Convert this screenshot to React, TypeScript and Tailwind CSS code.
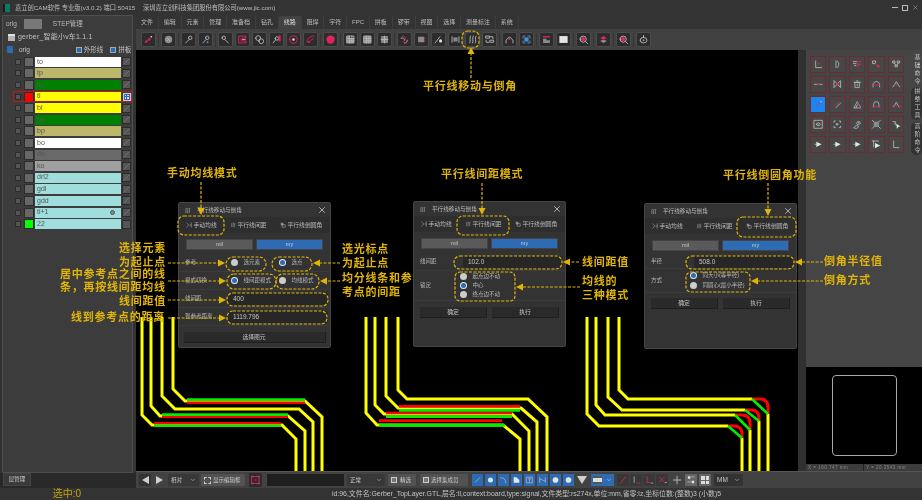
import React from 'react';
import { ChevronDown, X } from 'lucide-react';

const R = '#e0245e';
const Y = '#e0b507';
const dot = (x: number, y: number, r: number) => `M${x - r} ${y}a${r} ${r} 0 1 0 ${2 * r} 0a${r} ${r} 0 1 0 ${-2 * r} 0Z`;

type G = { g?: string; r?: string; b?: string; gf?: string; rf?: string; wf?: string; bf?: string; sep?: boolean };

function Glyph({ g, r, b, gf, rf, wf, bf }: G) {
  return (
    <svg viewBox="0 0 16 16" className="w-full h-full block" fill="none" strokeWidth="1.3" strokeLinecap="round" strokeLinejoin="round">
      {gf && <path d={gf} fill="#8a8a8a" />}
      {g && <path d={g} stroke="#b8b8b8" />}
      {bf && <path d={bf} fill="#4a90d9" />}
      {b && <path d={b} stroke="#4a90d9" />}
      {r && <path d={r} stroke={R} />}
      {wf && <path d={wf} fill="#e4e4e4" />}
      {rf && <path d={rf} fill={R} />}
    </svg>
  );
}

const probe = 'M4 13l5-5' + dot(10.5, 5.5, 2.5);
const grid = 'M3 3h10v10H3zM3 6.5h10M3 10h10M6.5 3v10M10 3v10';
const waves = 'M4 13c2-3-1-6 1-10M8 13c2-3-1-6 1-10M12 13c2-3-1-6 1-10';

const tools: G[] = [
  { r: 'M3 12l9-7', rf: dot(5, 11, 1.8) + dot(9, 8, 1.8), wf: dot(12, 4, 1.2), sep: true },
  { gf: dot(8, 8, 5.5), g: 'M6 6l4 4M10 6l-4 4', sep: true },
  { g: probe, sep: false },
  { g: probe, bf: dot(11, 12, 1.4), sep: true },
  { g: 'M12 13L7 8' + dot(5.5, 5.5, 2.5) },
  { r: 'M3 3h10v3H6v4h7v3H3z', g: 'M8 8h4' },
  { g: dot(6, 6, 3.5) + dot(10.5, 10.5, 3.5) },
  { g: 'M3 13l4-5' + dot(8.5, 6.5, 2.5), rf: 'M11 2h3v9h-3z' },
  { r: dot(8, 8, 5.5), wf: dot(8, 8, 1.8) },
  { r: 'M3 12c0-5 4-9 10-9M7 12c0-2 2-4 5-5', rf: dot(5.5, 11.5, 1.5), sep: true },
  { rf: dot(8, 8, 6), wf: dot(8, 8, 3.2), sep: true },
  { gf: 'M3 3h4v3h6v7H3z', g: grid },
  { gf: 'M3 3h10v10H3z', g: grid },
  { gf: 'M3 3h10v10H3z', g: 'M3 8h10M8 3v10', sep: true },
  { r: 'M5 3c5 0 6 4 3 6s-2 4 3 4', g: 'M3 6c3-1 5 0 5 3M8 13c2 0 4-1 4-4' },
  { gf: 'M3 4h9v8H3z', rf: dot(13, 6, 1) + dot(13, 10, 1) },
  { g: 'M3 13l7-9', wf: dot(11, 10, 2.2) },
  { g: 'M3 4v8M13 4v8', gf: 'M5 5h6v6H5z' },
  { g: waves },
  { g: 'M3 3h5v3H3zM9 9h5v3H9zM8 4h5v3M3 9v3h4', sep: true },
  { g: 'M3 13V9l5-5 5 5v4', rf: dot(8, 7, 1.6) },
  { b: 'M3 6V3h3M10 3h3v3M13 10v3h-3M6 13H3v-3', bf: 'M5 5h6v6H5z', sep: true },
  { gf: 'M3 7h5v2h5v4H3z', rf: 'M3 3h10v2H3z' },
  { wf: 'M2 3h12v10H2z', bf: 'M5 7h6v2H5z', sep: true },
  { g: dot(7.5, 7.5, 4.5) + 'M11 11l3 3', rf: dot(7.5, 7.5, 3), sep: true },
  { gf: 'M3 10l5 3 5-3-5-2z', rf: 'M3 6l5 2 5-2-5-3z', sep: true },
  { g: dot(7.5, 7.5, 4.5) + 'M11 11l3 3', rf: dot(7.5, 7.5, 3), sep: true },
  { g: 'M3 9a5 4 0 1 0 10 0a5 4 0 1 0 -10 0M8 2v3', gf: dot(8, 9, 1.5) },
];

const sidePanel: G[] = [
  { g: 'M4 3v10h9', rf: dot(9, 7, 1.2) },
  { g: 'M8 3c3 1 3 9 0 10M6 3v10' },
  { g: 'M2 4h5M2 7h4M4 10h2', r: 'M9 13V4h5M9 8h4' },
  { g: 'M3 3h4v4H3z', rf: dot(11, 11, 2), r: 'M6 6l4 4' },
  { g: 'M3 3h3v3H3zM10 3h3v3h-3zM6.5 9h3v3h-3zM5 6l2 3M11 6l-2 3' },
  { g: 'M2 8h4M10 8h4', rf: dot(8, 8, 1.5) },
  { g: 'M3 3v10l4-4V7zM13 3v10l-4-4V7z', rf: dot(8, 8, 1.8) },
  { g: 'M5 5h6v8H5zM3 5h10M7 3h2', gf: 'M7 7h2v4H7z' },
  { g: 'M3 12V9c0-3 2-5 5-5s5 2 5 5v3', r: 'M3 9h10' },
  { g: 'M3 12l5-8 5 8', r: 'M5 9h6', rf: dot(8, 8, 1.2) },
  { r: 'M4 12L11 5', wf: dot(12, 4, 1), b: 'M2 14' },
  { r: 'M3 11l7-7', g: 'M6 13l7-7' },
  { g: 'M3 13l5-9 5 9zM6 13l2-4', r: 'M9 6l3 7' },
  { g: 'M4 12V8a4 4 0 0 1 8 0v4', r: 'M2 12h12' },
  { g: 'M4 12l4-7 4 7', r: 'M2 10h12' },
  { g: 'M2 2h12v12H2zM5 8a3 2 0 0 1 6 0a3 2 0 0 1-6 0', gf: dot(8, 8, 1) },
  { g: 'M3 5V3h2M11 3h2v2M13 11v2h-2M5 13H3v-2M7 7h2v2H7z' },
  { g: 'M3 13l4-4 3 3-3 2zM7 6l3-3 3 3-3 3z', gf: 'M8 6l2-2 2 2-2 2z' },
  { gf: 'M4 4h8v8H4z', g: 'M2 2l2 2M14 2l-2 2M2 14l2-2M14 14l-2-2' },
  { g: 'M3 4h4v3M5 7l3 3', wf: 'M8 7l6 4-3 1-2 3z' },
  { wf: 'M5 4l8 4-8 4z', g: 'M3 8h2' },
  { wf: 'M5 4l8 4-8 4z', g: 'M3 8h2' },
  { wf: 'M5 4l8 4-8 4z', g: 'M3 8h2' },
  { wf: 'M6 6l8 4-8 4z', g: 'M2 3h9M4 3v9' },
  { g: 'M4 3v10h8' },
];

type LayerT = { n: string; bg: string; c?: string; sel?: boolean; eye?: boolean; blank?: boolean };
const layers: LayerT[] = [
  { n: 'to', bg: 'bg-[#ffffff]' },
  { n: 'tp', bg: 'bg-[#bdb76b]' },
  { n: 'ts', bg: 'bg-[#008000]' },
  { n: 'tl', bg: 'bg-[#ffff00]', c: 'bg-[#ff0000]', sel: true },
  { n: 'bl', bg: 'bg-[#ffff00]' },
  { n: 'bs', bg: 'bg-[#008000]' },
  { n: 'bp', bg: 'bg-[#bdb76b]' },
  { n: 'bo', bg: 'bg-[#ffffff]' },
  { n: 'drl', bg: 'bg-[#696969]' },
  { n: 'ko', bg: 'bg-[#a0a0a0]' },
  { n: 'drl2', bg: 'bg-[#a0dede]' },
  { n: 'gdl', bg: 'bg-[#a0dede]' },
  { n: 'gdd', bg: 'bg-[#a0dede]' },
  { n: 'tl+1', bg: 'bg-[#a0dede]', eye: true },
  { n: '22', bg: 'bg-[#a0dede]', c: 'bg-[#00ff00]', blank: true },
];

const menus = ['文件', '编辑', '元素', '管理', '准备档', '钻孔', '线路', '阻焊', '字符', 'FPC', '拼板', '锣带', '视图', '选择', '测量标注', '系统'];

function Layer({ l }: { l: LayerT }) {
  return (
    <div className={`flex items-center h-[11.6px] relative pl-[13px] ${l.sel ? 'outline outline-1 outline-[#c01818] -outline-offset-1 ml-[13px] !pl-0 w-[119px]' : ''}`}>
      <div className="w-[6px] h-[6px] ml-[2px] bg-[#555555] border border-[#2c2c2c] shrink-0" />
      <div className={`w-[10px] h-[10px] ml-[3px] border border-[#2c2c2c] shrink-0 ${l.c ?? 'bg-[#666666]'}`} />
      <div className={`w-[86px] h-[10px] ml-[1px] flex items-center justify-between px-[2px] shrink-0 text-[#555555] text-[7px] ${l.bg}`}>
        <span>{l.n}</span>
        {l.eye && <span className="w-[5px] h-[5px] rounded-full border border-[#555555] bg-[#888888] mr-[4px]" />}
      </div>
      {l.sel ? (
        <div className="w-[8px] h-[8px] ml-[1.5px] bg-[#2d6cb5] grid grid-cols-2 gap-px p-px border border-[#ccd] shrink-0">
          <span className="bg-[#cde]" /><span className="bg-[#cde]" /><span className="bg-[#cde]" /><span className="bg-[#cde]" />
        </div>
      ) : (
        <div className="w-[9px] h-[9px] ml-[1px] bg-[#555555] border border-[#2c2c2c] shrink-0 overflow-hidden">
          {!l.blank && <svg viewBox="0 0 9 9" className="w-full h-full"><path d="M1 8L8 1" stroke="#777" strokeWidth="1" /></svg>}
        </div>
      )}
    </div>
  );
}

function LeftPanel() {
  return (
    <div className="w-[136px] shrink-0 flex flex-col">
      <div className="flex-1 mx-[2px] mr-[3px] border border-[#4e4e4e] bg-[#3c3c3c] flex flex-col">
        <div className="h-[16px] flex items-center text-[6.5px] text-[#b5b5b5] pl-[3px]">
          <span>orig</span>
          <div className="w-[18px] h-[10px] bg-[#787878] ml-[7px]" />
          <span className="ml-[11px]">STEP管理</span>
        </div>
        <div className="h-[11px] flex items-center text-[7px] text-[#c0c0c0] pl-[5px]">
          <div className="w-[7px] h-[7px] bg-[#b5b5b5] border-t-2 border-[#e0e0e0]" />
          <span className="ml-[3px] tracking-[0.2px]">gerber_智能小v车1.1.1</span>
        </div>
        <div className="h-[13px] flex items-center text-[6.5px] text-[#c4c4c4] pl-[4px]">
          <div className="w-[6px] h-[7px] bg-[#2d6cb5] rounded-[1px]" />
          <span className="ml-[6px]">orig</span>
          <div className="w-[6px] h-[6px] bg-[#2d6cb5] border border-[#9ab] ml-[46px]" />
          <span className="ml-[2px]">外形线</span>
          <div className="w-[6px] h-[6px] bg-[#2d6cb5] border border-[#9ab] ml-[7px]" />
          <span className="ml-[2px]">拼板</span>
        </div>
        <div className="-ml-[3px] flex flex-col">
          {layers.map((l) => <Layer key={l.n} l={l} />)}
        </div>
      </div>
      <div className="h-[15px] bg-[#292929] flex items-start">
        <div className="ml-[3px] w-[28px] h-[13px] bg-[#3a3a3a] border border-[#444] flex items-center justify-center text-[5.5px] text-[#cfcfcf]">层管理</div>
      </div>
    </div>
  );
}

function Box({ i, cls }: { i: G; cls?: string }) {
  return <div className={`w-[15px] h-[15px] rounded-[2px] p-[1px] bg-[#2c2c2c] border border-[#4b4b4b] ${cls ?? ''}`}><Glyph {...i} /></div>;
}

function Menu() {
  return (
    <div className="h-[14px] bg-[#333333] flex items-end text-[6px] text-[#bcbcbc]">
      {menus.map((m) => (
        <div key={m} className={`h-[13px] flex items-center px-[4.9px] border-r border-[#3e3e3e] ${m === '线路' ? 'bg-[#424242] rounded-t-[2px] text-[#dddddd]' : ''}`}>{m}</div>
      ))}
    </div>
  );
}

function Toolbar() {
  return (
    <div className="h-[21px] bg-[#414141] flex items-center pl-[4px]">
      {tools.map((t, i) => (
        <React.Fragment key={i}>
          <div className="w-[17px] flex justify-center"><Box i={t} /></div>
          {t.sep && <div className="w-[3px] flex justify-center"><div className="w-px h-[14px] bg-[#363636]" /></div>}
        </React.Fragment>
      ))}
    </div>
  );
}

function Traces() {
  const y = '#ffff00';
  const paths = [
    'M142 317V415L152 425H282L296 439V472', 'M151 317V406L160 416H288L305 431V472', 'M162 317V396L175 409H299L313 422V472', 'M173 317V389L185 401H305L322 417V472',
    'M366 317V413L377 425H503L520 439V472', 'M375 317V405L384 414H512L529 431V472', 'M386 317V396L398 408H521L537 422V472', 'M398 317V390L407 399H528L547 417V472',
    'M587 317V414L599 426H728M742 438V472', 'M596 317V405L605 415H735M750 430V472', 'M608 317V397L622 410H745M759 421V472', 'M619 317V390L628 399H752M768 414V472',
  ];
  const reds = ['M154 423.2H281', 'M162 416.8H288', 'M187 402.8H305', 'M379 420.6H502', 'M386 413H512', 'M399 406.4H520',
    'M728 426H734Q742 426 742 434V438', 'M735 415H742Q750 415 750 423V430', 'M745 410H751Q759 410 759 418V421', 'M752 399H760Q768 399 768 407V414'];
  const greens = ['M154 425.8H281', 'M162 414.6H288', 'M187 399.6H305', 'M379 425.4H505', 'M386 416.6H512', 'M399 410.4H520',
    'M728 426L742 438', 'M735 415L750 430', 'M745 410L759 421', 'M752 399L768 414'];
  return (
    <svg viewBox="136 50 662 421" className="absolute inset-0 w-full h-full" fill="none">
      {paths.map((d, i) => <path key={i} d={d} stroke={y} strokeWidth="3" />)}
      {reds.map((d, i) => <path key={i} d={d} stroke="#ff0000" strokeWidth={i > 5 ? 3 : 2.6} />)}
      {greens.map((d, i) => <path key={i} d={d} stroke="#00ee00" strokeWidth="2.6" />)}
    </svg>
  );
}

function RightPanel() {
  const labels = [
    { t: '基础命令', c: 'h-[33px] mt-[3px]' },
    { t: '拼整工具', c: 'h-[33px] mt-[1px] bg-[#333333]' },
    { t: '高阶命令', c: 'h-[33px] mt-[2px] bg-[#333333]' },
  ];
  return (
    <div className="w-[116px] shrink-0 flex flex-col">
      <div className="flex-1 bg-[#454545] flex justify-between">
        <div className="grid grid-cols-5 gap-x-[3px] gap-y-[3.4px] pl-[3.5px] pt-[6px] content-start">
          {sidePanel.map((s, i) => (
            <div key={i} className={`w-[16.6px] h-[16.6px] p-[2px] border border-[#6e2a30] ${i === 10 ? 'bg-[#1a86f0]' : 'bg-[#474747]'}`}><Glyph {...s} /></div>
          ))}
        </div>
        <div className="w-[11px] flex flex-col">
          {labels.map((l) => (
            <div key={l.t} className={`${l.c} rounded-full flex items-center justify-center whitespace-nowrap text-[6px] leading-[7px] tracking-[2px] text-[#c8c8c8] [writing-mode:vertical-rl]`}>{l.t}</div>
          ))}
        </div>
      </div>
      <div className="h-[104px] bg-black flex flex-col">
        <div className="flex-1 flex items-center justify-center">
          <div className="w-[65px] h-[81px] border border-[#a8a8a8] rounded-[4px]" />
        </div>
        <div className="h-[7px] bg-[#3c3c3c] flex text-[4.5px] leading-[7px] tracking-[0.5px] text-[#888888]">
          <div className="w-[58px] pl-[2px] border-r border-[#222]">X = 160.747 mm</div>
          <div className="flex-1 pl-[2px]">Y = 20.3543 mm</div>
        </div>
      </div>
    </div>
  );
}

const blues: G[] = [
  { g: 'M4 12l8-8' }, { wf: dot(8, 8, 4.5) }, { g: 'M3 4c6 0 9 3 9 9' }, { wf: 'M3 13V3h5l5 5v5z' },
  { g: 'M3 3h10v10H3zM6 6h4M8 6v5' }, { g: 'M3 4v8M13 4v8M3 6c4 0 6 4 10 4' }, { wf: dot(8, 8, 5), bf: 'M7 4h2v8H7z' }, { wf: dot(8, 8, 5), bf: 'M4 7h8v2H4z' },
];
const reds2: G[] = [{ r: 'M4 13l8-10' }, { g: 'M5 3v9', r: 'M10 13h4' }, { r: 'M5 3v9h5', g: 'M12 13h2' }, { r: 'M4 4l7 7M11 4l-7 7', g: 'M13 12h2' }];

function BottomBar() {
  const btn = 'h-[12px] rounded-[1px] flex items-center text-[5.5px] text-[#c8c8c8]';
  return (
    <div className="h-[17px] bg-[#424242] border-t border-[#555555] flex items-center pl-[3px]">
      <div className="w-[12px] h-[12px] bg-[#333333] flex items-center justify-center">
        <div className="w-0 h-0 border-y-[4px] border-y-transparent border-r-[7px] border-r-[#cfcfcf]" />
      </div>
      <div className="w-[12px] h-[12px] flex items-center justify-center ml-[2px]">
        <div className="w-0 h-0 border-y-[4px] border-y-transparent border-l-[7px] border-l-[#cfcfcf]" />
      </div>
      <div className={`${btn} w-[31px] ml-[3px] bg-[#383838] justify-between px-[3px]`}><span>相对</span><ChevronDown size={6} /></div>
      <div className={`${btn} w-[44px] ml-[2px] bg-[#525252] px-[3px] gap-[2px]`}>
        <span className="w-[7px] h-[7px] border border-dashed border-[#ccc]" /><span>显示编辑框</span>
      </div>
      <div className="w-[13px] h-[14px] ml-[4px] bg-[#2c2c2c] p-px"><Glyph r="M3 3h10v10H3z" rf={dot(3, 3, 1.4) + dot(13, 3, 1.4) + dot(3, 13, 1.4) + dot(13, 13, 1.4) + dot(8, 8, 1)} /></div>
      <div className="w-[77px] h-[12px] ml-[5px] bg-[#1f1f1f]" />
      <div className={`${btn} w-[38px] ml-[3px] bg-[#383838] justify-between px-[3px]`}><span>正常</span><ChevronDown size={6} /></div>
      <div className={`${btn} w-[28px] ml-[3px] bg-[#525252] px-[3px] gap-[3px]`}><span className="w-[6px] h-[6px] border border-[#ccc] bg-[#777]" /><span>精选</span></div>
      <div className={`${btn} w-[48px] ml-[4px] bg-[#525252] pl-[3px] gap-[2px]`}><span className="w-[6px] h-[6px] border border-[#ccc] bg-[#777]" /><span className="whitespace-nowrap">选择集成员</span></div>
      <div className="flex ml-[4px] gap-[2px]">
        {blues.map((b, i) => <div key={i} className="w-[11px] h-[12px] bg-[#2d6cb5] p-[1px]"><Glyph {...b} /></div>)}
      </div>
      <div className="w-0 h-0 ml-[3px] border-x-[5px] border-x-transparent border-t-[8px] border-t-[#d0d0d0]" />
      <div className="w-[23px] h-[12px] ml-[4px] bg-[#2d6cb5] flex items-center justify-between px-[2px] text-[#ddd]">
        <span className="w-[9px] h-[8px] bg-[#ddd] border-y-2 border-[#555]" /><ChevronDown size={6} />
      </div>
      <div className="flex ml-[3px] gap-[1px]">
        {reds2.map((b, i) => <div key={i} className="w-[12px] h-[12px] bg-[#383838] p-[1px]"><Glyph {...b} /></div>)}
      </div>
      <div className="w-[12px] h-[12px] ml-[3px]"><Glyph g="M8 3v10M3 8h10" /></div>
      <div className="w-[12px] h-[12px] ml-[2px] bg-[#666] p-[1px]"><Glyph wf="M3 2h4v4H3zM9 9h4v4H9z" g="M9 3h4M3 11h4" /></div>
      <div className="w-[12px] h-[12px] ml-[2px] bg-[#666] grid grid-cols-2 gap-px p-[2px]"><span className="bg-[#ddd]" /><span className="bg-[#ddd]" /><span className="bg-[#ddd]" /><span className="bg-[#ddd]" /></div>
      <div className={`${btn} w-[29px] ml-[3px] bg-[#333333] justify-between px-[3px] text-[6.5px]`}><span>MM</span><ChevronDown size={6} /></div>
    </div>
  );
}

function Radio({ on }: { on?: boolean }) {
  return <span className={`w-[7px] h-[7px] rounded-full shrink-0 flex items-center justify-center ${on ? 'bg-[#e0e8f0]' : 'bg-[#cccccc]'}`}>{on && <span className="w-[5px] h-[5px] rounded-full bg-[#2d6cb5]" />}</span>;
}

function Field({ v }: { v: string }) {
  return <div className="w-[100px] h-[12px] bg-[#272727] rounded-[2px] flex items-center pl-[5px] text-[6.5px] text-[#c4c4c4]">{v}</div>;
}

function Dialog({ pos, children }: { pos: string; children: React.ReactNode }) {
  const tab = 'flex items-center gap-[1.5px] text-[5.8px] text-[#bcbcbc]';
  return (
    <div className={`absolute ${pos} h-[146px] w-[153px] bg-[#333333] border border-[#444444] rounded-[2px] flex flex-col`}>
      <div className="h-[14px] shrink-0 flex items-center pl-[5px] pr-[3px] text-[5.6px] text-[#bcbcbc]">
        <div className="w-[7px] h-[7px]"><Glyph g={waves} /></div>
        <span className="ml-[6px] flex-1">平行线移动与倒角</span>
        <X size={10} color="#e8e8e8" strokeWidth={1.6} />
      </div>
      <div className="h-[16px] shrink-0 bg-[#2e2e2e] flex items-center pl-[7px]">
        <div className={`${tab} w-[44px]`}><span className="w-[6px] h-[6px] shrink-0"><Glyph g="M2 2c3 3 3 3 5 6M2 14c3-3 3-3 5-6M14 2v12M11 8h3" /></span>手动均线</div>
        <div className={`${tab} w-[50px]`}><span className="w-[6px] h-[6px] shrink-0"><Glyph g={waves} /></span>平行线间距</div>
        <div className={tab}><span className="w-[6px] h-[6px] shrink-0"><Glyph gf="M2 2h7v7H2z" g="M7 7h7v7H7z" /></span>平行线倒圆角</div>
      </div>
      <div className="flex gap-[3px] px-[7px] mt-[6px] h-[11px] shrink-0 text-[5.5px] text-[#c8c8c8]">
        <div className="flex-1 bg-[#5a5a5a] border border-[#444] flex items-center justify-center">mil</div>
        <div className="flex-1 bg-[#2d6cb5] border border-[#444] flex items-center justify-center">my</div>
      </div>
      <div className="flex-1 flex flex-col pt-[4px] text-[5.5px] text-[#b8b8b8]">{children}</div>
    </div>
  );
}

function Row({ label, children, cls }: { label: string; children: React.ReactNode; cls?: string }) {
  return (
    <div className={`flex items-center pl-[6px] border-b border-[#3b3b3b] ${cls ?? 'h-[18px]'}`}>
      <span className="w-[43px] shrink-0 whitespace-nowrap">{label}</span>
      {children}
    </div>
  );
}

function Btn({ t, cls }: { t: string; cls: string }) {
  return <div className={`${cls} bg-[#2a2a2a] border-b border-r border-[#1e1e1e] flex items-center justify-center text-[5.8px] text-[#c0c0c0]`}>{t}</div>;
}

function Dialogs() {
  return (
    <>
      <Dialog pos="left-[178px] top-[202px]">
        <Row label="参考">
          <div className="w-[48px] flex items-center gap-[6px] ml-[2.5px]"><Radio /><span>选元素</span></div>
          <div className="flex items-center gap-[6px]"><Radio on /><span>选点</span></div>
        </Row>
        <Row label="模式切换">
          <div className="w-[48px] flex items-center gap-[6px] ml-[2.5px]"><Radio on /><span className="whitespace-nowrap">线间距模式</span></div>
          <div className="flex items-center gap-[6px]"><Radio /><span>均线模式</span></div>
        </Row>
        <Row label="线间距"><Field v="400" /></Row>
        <Row label="到参考距离"><Field v="1119.796" /></Row>
        <div className="flex justify-center mt-[6px]"><Btn t="选择图元" cls="w-[142px] h-[11px]" /></div>
      </Dialog>
      <Dialog pos="left-[413px] top-[201px]">
        <Row label="线间距" cls="h-[18px]"><Field v="102.0" /></Row>
        <Row label="锁定" cls="h-[30px]">
          <div className="flex flex-col gap-[2px] -ml-[3.5px] leading-[7px]">
            <div className="flex items-center gap-[6px]"><Radio /><span>起点边不动</span></div>
            <div className="flex items-center gap-[6px]"><Radio on /><span>中心</span></div>
            <div className="flex items-center gap-[6px]"><Radio /><span>终点边不动</span></div>
          </div>
        </Row>
        <div className="flex gap-[5px] px-[6px] mt-[6px]"><Btn t="确定" cls="flex-1 h-[11px]" /><Btn t="执行" cls="flex-1 h-[11px]" /></div>
      </Dialog>
      <Dialog pos="left-[644px] top-[203px]">
        <Row label="半径" cls="h-[14px]"><Field v="508.0" /></Row>
        <Row label="方式" cls="h-[24px]">
          <div className="flex flex-col gap-[3px] -ml-[4.5px] leading-[7px]">
            <div className="flex items-center gap-[6px]"><Radio on /><span>同大小(等半径)</span></div>
            <div className="flex items-center gap-[6px]"><Radio /><span>同圆心(最小半径)</span></div>
          </div>
        </Row>
        <div className="flex gap-[5px] px-[6px] mt-[5px]"><Btn t="确定" cls="flex-1 h-[11px]" /><Btn t="执行" cls="flex-1 h-[11px]" /></div>
      </Dialog>
    </>
  );
}

const notes = [
  { c: 'left-[167px] top-[166px]', t: '手动均线模式' },
  { c: 'left-[423px] top-[79px]', t: '平行线移动与倒角' },
  { c: 'left-[441px] top-[167px]', t: '平行线间距模式' },
  { c: 'left-[723px] top-[168px]', t: '平行线倒圆角功能' },
  { c: 'left-[119px] top-[241px]', t: '选择元素' },
  { c: 'left-[119px] top-[255px]', t: '为起止点' },
  { c: 'left-[60px] top-[267px]', t: '居中参考点之间的线' },
  { c: 'left-[60px] top-[280px]', t: '条，再按线间距均线' },
  { c: 'left-[119px] top-[294px]', t: '线间距值' },
  { c: 'left-[71px] top-[310px]', t: '线到参考点的距离' },
  { c: 'left-[342px] top-[242px]', t: '选光标点' },
  { c: 'left-[342px] top-[256px]', t: '为起止点' },
  { c: 'left-[342px] top-[271px]', t: '均分线条和参' },
  { c: 'left-[342px] top-[285px]', t: '考点的间距' },
  { c: 'left-[582px] top-[255px]', t: '线间距值' },
  { c: 'left-[582px] top-[274px]', t: '均线的' },
  { c: 'left-[582px] top-[288px]', t: '三种模式' },
  { c: 'left-[824px] top-[254px]', t: '倒角半径值' },
  { c: 'left-[824px] top-[273px]', t: '倒角方式' },
];

const rects = [
  [178, 216, 46, 19, 6], [226, 257, 40, 14, 7], [272, 257, 40, 14, 7], [227, 274, 49, 15, 7], [276, 274, 43, 15, 7],
  [227, 293, 101, 13, 6], [227, 311, 100, 13, 6], [457, 216, 52, 19, 6], [454, 256, 108, 13, 6], [455, 272, 60, 29, 5],
  [737, 217, 59, 20, 6], [686, 256, 108, 13, 6], [686, 272, 64, 20, 5], [462, 31, 17, 17, 6],
];

const arrows = [
  [471, 78, 471, 47], [201, 182, 201, 215], [168, 263, 225, 263], [340, 263, 313, 263], [168, 281, 226, 281], [340, 281, 320, 281],
  [168, 300, 226, 300], [168, 318, 226, 318], [482, 183, 482, 215], [579, 262, 563, 262], [580, 287, 516, 287], [768, 183, 768, 216],
  [823, 262, 795, 262], [823, 281, 751, 281],
];

function Overlay() {
  return (
    <>
      <svg viewBox="0 0 922 500" className="absolute left-0 top-0 w-[922px] h-[500px]" fill="none">
        {rects.map(([x, y, w, h, r], i) => <rect key={i} x={x} y={y} width={w} height={h} rx={r} stroke={Y} strokeWidth="1.2" strokeDasharray="3 1.5" />)}
        {arrows.map(([x1, y1, x2, y2], i) => {
          const dx = Math.sign(x2 - x1), dy = Math.sign(y2 - y1), L = 7, W = 3.5;
          const bx = x2 - dx * L, by = y2 - dy * L;
          return (
            <g key={i}>
              <path d={`M${x1} ${y1}L${bx} ${by}`} stroke={Y} strokeWidth="1.2" strokeDasharray="3 1.5" />
              <path d={`M${x2} ${y2}L${bx + dy * W} ${by + dx * W}L${bx - dy * W} ${by - dx * W}Z`} fill={Y} />
            </g>
          );
        })}
      </svg>
      {notes.map((n, i) => (
        <span key={i} className={`absolute ${n.c} text-[11px] leading-[14px] tracking-[0.75px] font-bold whitespace-nowrap text-[#e0b507]`}>{n.t}</span>
      ))}
    </>
  );
}

export default function App() {
  return (
    <div className="relative w-[922px] h-[500px] overflow-hidden bg-[#333333] flex flex-col font-['Liberation_Sans','Noto_Sans_CJK_SC',sans-serif] blur-[0.4px]">
      <div className="h-[15px] shrink-0 flex items-center pl-[3px] pr-[3px] text-[6.25px] text-[#bdbdbd]">
        <div className="w-[7px] h-[8px] bg-[#0d7a5f] border-l-2 border-[#1a1a1a]" />
        <span className="ml-[5px] w-[128px] whitespace-nowrap">嘉立创CAM软件 专业版(v3.0.2) 端口:50415</span>
        <span className="whitespace-nowrap">深圳嘉立创科技集团股份有限公司(www.jlc.com)</span>
        <div className="ml-auto flex items-center gap-[4px]">
          <div className="w-[6px] h-px bg-[#bbb]" />
          <div className="w-[6px] h-[6px] border border-[#bbb]" />
          <X size={7} color="#bbb" strokeWidth={1.6} />
        </div>
      </div>
      <div className="flex-1 flex min-h-0">
        <LeftPanel />
        <div className="flex-1 flex flex-col min-w-0">
          <Menu />
          <Toolbar />
          <div className="flex-1 flex min-h-0">
            <div className="relative w-[662px] shrink-0 bg-black overflow-hidden"><Traces /></div>
            <div className="w-[8px] shrink-0 bg-[#303030]" />
            <RightPanel />
          </div>
          <BottomBar />
        </div>
      </div>
      <div className="h-[12px] shrink-0 bg-[#333333] flex items-center text-[#c4c4c4]">
        <span className="w-[136px] text-center text-[10px] leading-[12px] text-[#c9a406] pr-[2px]">选中:0</span>
        <span className="ml-[196px] text-[6.9px] leading-[12px] whitespace-nowrap">id:96,文件名:Gerber_TopLayer.GTL,层名:tl,context:board,type:signal,文件类型:rs274x,单位:mm,省零:lz,坐标位数:(整数)3 (小数)5</span>
      </div>
      <Dialogs />
      <Overlay />
    </div>
  );
}
